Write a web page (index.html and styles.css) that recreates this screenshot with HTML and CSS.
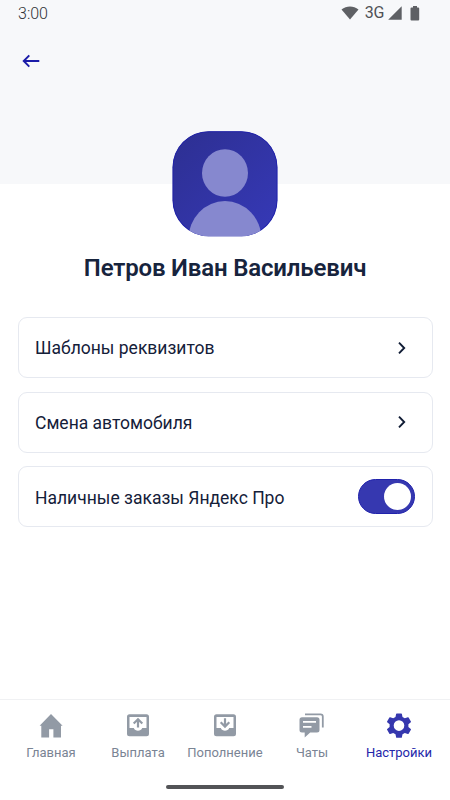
FILE: index.html
```html
<!DOCTYPE html>
<html lang="ru">
<head>
<meta charset="utf-8">
<meta name="viewport" content="width=device-width, initial-scale=1">
<title>Настройки</title>
<link rel="stylesheet" href="styles.css">
</head>
<body>
<div class="app">
  <header class="header">
    <div class="status">
      <span class="time">3:00</span>
      <div class="signals">
        <svg class="wifi" width="18" height="14" viewBox="0 0 18 14"><path d="M.5 3.6C5.500-.4 12.500-.4 17.500 3.600L9 13.600z"/></svg>
        <span class="network">3G</span>
        <svg class="cell" width="14" height="14" viewBox="0 0 14 14"><path d="M13.700.2v13.600H.2z"/></svg>
        <svg class="battery" width="10" height="15" viewBox="0 0 10 15"><path d="M3 0h4v1.500h1.200q1 0 1 1V13.500q0 1-1 1H1.500q-1 0-1-1V2.500q0-1 1-1H3z"/></svg>
      </div>
    </div>
    <a class="back" href="#" aria-label="Назад">
      <svg width="18" height="14" viewBox="0 0 18 14"><path d="M17.300 7H2M7.300 1.300 1.700 7l5.600 5.700"/></svg>
    </a>
  </header>
  <main class="profile">
    <svg class="avatar" width="106" height="106" viewBox="0 0 106 106">
      <defs>
        <linearGradient id="fill" x1="0" y1="0" x2="1" y2="1"><stop offset="0" stop-color="#2d2f91"/><stop offset="1" stop-color="#3639b8"/></linearGradient>
        <clipPath id="shape"><rect x=".5" y=".2" width="105" height="105" rx="36"/></clipPath>
      </defs>
      <g clip-path="url(#shape)">
        <rect width="106" height="106" fill="url(#fill)"/>
        <rect class="rim" x="1" y=".7" width="104" height="104" rx="35.500"/>
        <ellipse class="person" cx="53" cy="42" rx="23" ry="23.700"/>
        <ellipse class="person" cx="53" cy="108" rx="36.500" ry="38"/>
      </g>
    </svg>
    <h1 class="name">Петров Иван Васильевич</h1>
    <div class="options">
      <a class="card" href="#"><span class="label">Шаблоны реквизитов</span><svg class="chevron" width="10" height="14" viewBox="0 0 10 14"><path d="m2 1.600 5.200 5.400L2 12.400"/></svg></a>
      <a class="card" href="#"><span class="label">Смена автомобиля</span><svg class="chevron" width="10" height="14" viewBox="0 0 10 14"><path d="m2 1.600 5.200 5.400L2 12.400"/></svg></a>
      <div class="card"><span class="label">Наличные заказы Яндекс Про</span><span class="toggle" role="switch" aria-checked="true"><span class="knob"></span></span></div>
    </div>
  </main>
  <nav class="tabs">
    <a class="tab" href="#">
      <svg width="26" height="26" viewBox="0 0 26 26"><path d="M13 1 24.600 12.800H23V24.500h-7.600V16.200h-4.300v8.300H3.300V12.800H1.600z"/></svg>
      <span>Главная</span>
    </a>
    <a class="tab" href="#">
      <svg width="26" height="26" viewBox="0 0 26 26"><path fill-rule="evenodd" d="M4.500 1.300h17q2.500 0 2.500 2.500v17q0 2.500-2.500 2.500h-17Q2 23.300 2 20.800v-17q0-2.500 2.500-2.500zM4.500 4v11h4.300c1.200 3.600 7.200 3.600 8.400 0h4.300V4z"/><path class="mark" d="M13 14.600V6.500M8.700 10.500 13 6.200l4.300 4.300"/></svg>
      <span>Выплата</span>
    </a>
    <a class="tab" href="#">
      <svg width="26" height="26" viewBox="0 0 26 26"><path fill-rule="evenodd" d="M4.500 1.300h17q2.500 0 2.500 2.500v17q0 2.500-2.500 2.500h-17Q2 23.300 2 20.800v-17q0-2.500 2.500-2.500zM4.500 4v11h4.300c1.200 3.600 7.200 3.600 8.400 0h4.300V4z"/><path class="mark" d="M13 5.200v8.100M8.700 9.300l4.300 4.300 4.300-4.300"/></svg>
      <span>Пополнение</span>
    </a>
    <a class="tab" href="#">
      <svg width="26" height="26" viewBox="0 0 26 26"><path fill-rule="evenodd" d="M3 4.300h15q2.500 0 2.500 2.500V17q0 2.500-2.500 2.500h-6.800L5.700 24.500v-5H3Q.5 19.500.5 17V6.800Q.5 4.300 3 4.300zM4 8v1.800h13V8zM4 13v1.800h8.500V13z"/><path class="outline" d="M6 1.300h15.500q2.300 0 2.300 2.300v10.800"/></svg>
      <span>Чаты</span>
    </a>
    <a class="tab active" href="#">
      <svg width="26" height="26" viewBox="0 0 26 26"><path fill-rule="evenodd" d="M10.700.4h4.600q.5 0 .6.500l.6 3 2.300 1.300 3-1q.5-.2.800.3l2.300 3.900q.3.500-.1.900l-2.400 2v2.600l2.400 2q.4.400.1.900l-2.300 3.900q-.3.500-.8.300l-3-1-2.300 1.300-.6 3q-.1.500-.6.500h-4.600q-.5 0-.6-.5l-.6-3L7.200 20l-3 1q-.5.200-.8-.3l-2.300-3.900q-.3-.5.100-.9l2.400-2v-2.600l-2.400-2q-.4-.4-.1-.9l2.300-3.900q.3-.5.800-.3l3 1 2.300-1.300.6-3q.1-.5.600-.5zM13 7.300a5.300 5.300 0 1 0 0 10.600 5.300 5.300 0 0 0 0-10.600z"/></svg>
      <span>Настройки</span>
    </a>
  </nav>
  <footer class="gesture"><span class="handle"></span></footer>
</div>
</body>
</html>
```
FILE: styles.css
```css
* { box-sizing: border-box; }
body { margin: 0; background: #fff; font-family: Roboto, "Noto Sans", sans-serif; color: #10203a; }
a { color: inherit; text-decoration: none; }
svg { display: block; }
.app { width: 450px; height: 800px; display: flex; flex-direction: column; overflow: hidden; }
.header { height: 184px; flex: none; background: #f7f8fa; }
.status { height: 26px; padding: 0 30px 0 18px; display: flex; justify-content: space-between; align-items: center; color: #505256; font-size: 16px; line-height: 26px; }
.time { padding-top: 1px; font-weight: 300; color: #303236; }
.signals { display: flex; align-items: center; fill: #5e6064; }
.network { margin: 0 4px 0 6px; letter-spacing: -.3px; }
.battery { margin-left: 8px; }
.back { display: block; width: 18px; margin: 28px 0 0 22px; }
.back path { fill: none; stroke: #1b1ca8; stroke-width: 1.900; }
.profile { flex: 1; display: flex; flex-direction: column; align-items: center; }
.avatar { margin-top: -53px; flex: none; }
.rim { fill: none; stroke: #2022ac; stroke-width: 1; }
.person { fill: #8688cf; }
.name { margin: 15px 0 0; font-size: 24px; line-height: 32px; font-weight: 600; letter-spacing: -.17px; color: #17243d; white-space: nowrap; }
.options { width: 415px; margin-top: 33px; display: grid; gap: 13.700px; }
.card { height: 61px; padding: 0 16.500px; display: flex; align-items: center; justify-content: space-between; border: 1px solid #e6e9f0; border-radius: 9px; background: #fff; }
.label { padding-top: 1.500px; font-size: 17.500px; line-height: 24px; color: #142039; white-space: nowrap; }
.chevron { margin-right: 8px; }
.chevron path { fill: none; stroke: #101c35; stroke-width: 1.900; }
.toggle { width: 57px; height: 35px; padding: 0 3px; display: flex; align-items: center; justify-content: flex-end; border-radius: 18px; background: #3638b0; border: 1px solid #2022ac; }
.knob { width: 27px; height: 27px; border-radius: 50%; background: #fff; }
.tabs { height: 70px; flex: none; padding: 13px 7.500px 0; display: grid; grid-template-columns: repeat(5, 1fr); border-top: 1px solid #f0f1f3; }
.tab { display: flex; flex-direction: column; align-items: center; gap: 6px; fill: #929aa5; color: #7a8494; font-size: 13px; line-height: 16px; }
.mark { fill: none; stroke: #929aa5; stroke-width: 2.200; }
.outline { fill: none; stroke: #929aa5; stroke-width: 1.800; }
.active { color: #2426aa; fill: #3537ae; }
.gesture { height: 31px; flex: none; display: flex; justify-content: center; padding-top: 16px; }
.handle { width: 118px; height: 4px; border-radius: 2px; background: #535457; }
```
